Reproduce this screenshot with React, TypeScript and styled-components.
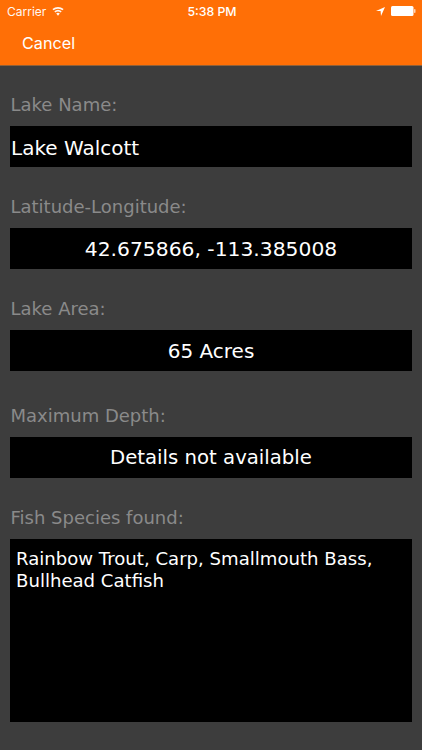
import React from 'react';
import styled, { createGlobalStyle } from 'styled-components';

const GlobalStyle = createGlobalStyle`
  html, body {
    margin: 0;
    padding: 0;
    background-color: #3d3d3d;
  }
`;

const Screen = styled.div`
  width: 422px;
  height: 750px;
  overflow: hidden;
  display: flex;
  flex-direction: column;
  background-color: #3d3d3d;
`;

const NavArea = styled.header`
  height: 65px;
  flex: none;
  background-color: #ff6f06;
  border-bottom: 1px solid #8f6038;
  color: #fff;
  font-family: 'Inter', 'Liberation Sans', sans-serif;
`;

const StatusBar = styled.div`
  height: 22px;
  display: grid;
  grid-template-columns: 1fr auto 1fr;
  align-items: center;
  padding: 0 6px 0 7px;
`;

const StatusLeft = styled.div`
  display: flex;
  align-items: center;
  gap: 6px;
  font-size: 12px;
  opacity: 0.95;
`;

const Clock = styled.div`
  font-size: 12.3px;
  font-weight: 500;
  margin-left: 1px;
`;

const StatusRight = styled.div`
  display: flex;
  justify-content: flex-end;
  align-items: center;
  gap: 6px;
`;

const CancelRow = styled.div`
  height: 41px;
  display: flex;
  align-items: center;
  padding-left: 22px;
  font-size: 16.2px;
`;

const Form = styled.main`
  flex: 1;
  display: flex;
  flex-direction: column;
  gap: 28px;
  padding: 27px 10px 0;
  font-family: 'DejaVu Sans', Verdana, sans-serif;
`;

const Field = styled.section<{ $extraTop?: number }>`
  margin-top: ${(p) => p.$extraTop || 0}px;
`;

const Label = styled.div`
  color: #8a8a8a;
  font-size: 18px;
  line-height: 24px;
  margin: 0 0 9px 0.5px;
`;

const ValueBox = styled.div<{ $align?: string; $size?: number }>`
  height: 41px;
  box-sizing: border-box;
  padding: ${(p) => (p.$align === 'left' ? '2px 0 0 1px' : '0')};
  background-color: #000;
  color: #fff;
  display: flex;
  align-items: center;
  justify-content: ${(p) => (p.$align === 'left' ? 'flex-start' : 'center')};
  font-size: ${(p) => p.$size || 20}px;
`;

const TextBlock = styled.div`
  height: 183px;
  box-sizing: border-box;
  padding: 9px 6px;
  background-color: #000;
  color: #fff;
  font-size: 18.1px;
  line-height: 22px;
`;

const WifiIcon = () => (
  <svg width="12" height="9" viewBox="0 0 14 10" fill="#fff">
    <path d="M7 10 4.9 7.4a3.3 3.3 0 0 1 4.2 0z" />
    <path d="M3.9 6.2 2.7 4.8a6.6 6.6 0 0 1 8.6 0l-1.2 1.4a4.8 4.8 0 0 0-6.2 0z" />
    <path d="M1.7 3.6.5 2.2a10 10 0 0 1 13 0l-1.2 1.4a8.2 8.2 0 0 0-10.6 0z" />
  </svg>
);

const LocationIcon = () => (
  <svg width="9" height="9" viewBox="0 0 9 9" fill="#fff">
    <path d="M9 0 0 4h4.6L5 9z" />
  </svg>
);

const BatteryIcon = () => (
  <svg width="25" height="10" viewBox="0 0 25 10" fill="#fff">
    <rect x="0" y="0" width="22.5" height="10" rx="1.5" />
    <rect x="23" y="3" width="1.5" height="4" rx="0.7" opacity="0.7" />
  </svg>
);

const App: React.FC = () => {
  return (
    <Screen>
      <GlobalStyle />
      <NavArea>
        <StatusBar>
          <StatusLeft>
            Carrier
            <WifiIcon />
          </StatusLeft>
          <Clock>5:38 PM</Clock>
          <StatusRight>
            <LocationIcon />
            <BatteryIcon />
          </StatusRight>
        </StatusBar>
        <CancelRow>Cancel</CancelRow>
      </NavArea>
      <Form>
        <Field>
          <Label>Lake Name:</Label>
          <ValueBox $align="left">Lake Walcott</ValueBox>
        </Field>
        <Field>
          <Label>Latitude-Longitude:</Label>
          <ValueBox $size={20.3}>42.675866, -113.385008</ValueBox>
        </Field>
        <Field>
          <Label>Lake Area:</Label>
          <ValueBox>65 Acres</ValueBox>
        </Field>
        <Field $extraTop={5}>
          <Label>Maximum Depth:</Label>
          <ValueBox $size={19.7}>Details not available</ValueBox>
        </Field>
        <Field>
          <Label>Fish Species found:</Label>
          <TextBlock>Rainbow Trout, Carp, Smallmouth Bass, Bullhead Catfish</TextBlock>
        </Field>
      </Form>
    </Screen>
  );
};

export default App;
